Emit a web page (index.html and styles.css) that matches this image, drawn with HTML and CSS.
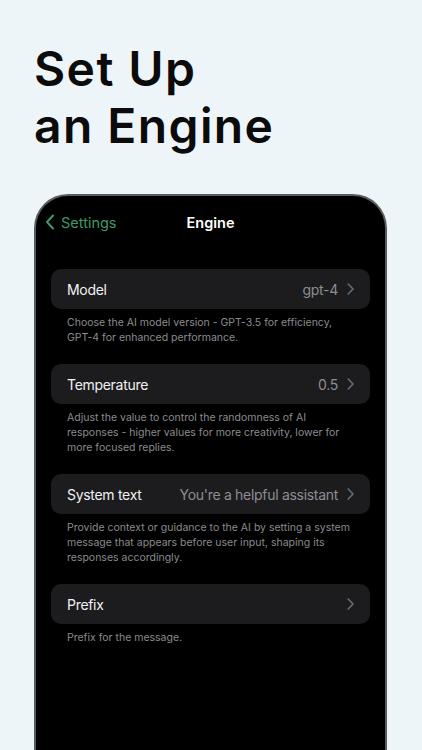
FILE: index.html
```html
<!DOCTYPE html>
<html>
<head>
<meta charset="utf-8">
<link rel="stylesheet" href="styles.css">
</head>
<body>
<div class="page">
  <h1 class="title">Set Up<br>an Engine</h1>
  <div class="phone">
    <div class="nav">
      <div class="back">
        <svg class="back-icon" width="10" height="16" viewBox="0 0 10 16"><path d="M8 1.5 L2 8 L8 14.5" fill="none" stroke="#3d9a68" stroke-width="2" stroke-linecap="round" stroke-linejoin="round"/></svg>
        <span>Settings</span>
      </div>
      <div class="nav-title">Engine</div>
    </div>
    <div class="list">
      <div class="group">
        <div class="row"><span class="label">Model</span><span class="value">gpt-4</span><svg class="chev" width="7" height="12" viewBox="0 0 7 12"><path d="M1.2 1 L6 6 L1.2 11" fill="none" stroke="#6c6c70" stroke-width="1.6" stroke-linecap="round" stroke-linejoin="round"/></svg></div>
        <p class="desc">Choose the AI model version - GPT-3.5 for efficiency, GPT-4 for enhanced performance.</p>
      </div>
      <div class="group">
        <div class="row"><span class="label">Temperature</span><span class="value">0.5</span><svg class="chev" width="7" height="12" viewBox="0 0 7 12"><path d="M1.2 1 L6 6 L1.2 11" fill="none" stroke="#6c6c70" stroke-width="1.6" stroke-linecap="round" stroke-linejoin="round"/></svg></div>
        <p class="desc">Adjust the value to control the randomness of AI responses - higher values for more creativity, lower for more focused replies.</p>
      </div>
      <div class="group">
        <div class="row"><span class="label">System text</span><span class="value">You're a helpful assistant</span><svg class="chev" width="7" height="12" viewBox="0 0 7 12"><path d="M1.2 1 L6 6 L1.2 11" fill="none" stroke="#6c6c70" stroke-width="1.6" stroke-linecap="round" stroke-linejoin="round"/></svg></div>
        <p class="desc">Provide context or guidance to the AI by setting a system message that appears before user input, shaping its responses accordingly.</p>
      </div>
      <div class="group">
        <div class="row"><span class="label">Prefix</span><span class="value"></span><svg class="chev" width="7" height="12" viewBox="0 0 7 12"><path d="M1.2 1 L6 6 L1.2 11" fill="none" stroke="#6c6c70" stroke-width="1.6" stroke-linecap="round" stroke-linejoin="round"/></svg></div>
        <p class="desc">Prefix for the message.</p>
      </div>
    </div>
  </div>
</div>
</body>
</html>
```
FILE: styles.css
```css
html, body {
  margin: 0;
  padding: 0;
  height: 750px;
  overflow: hidden;
  background: #eef5f8;
}
.page {
  height: 750px;
  overflow: hidden;
  display: flex;
  flex-direction: column;
}
.title {
  margin: 0;
  padding: 40px 0 0 34px;
  font-family: "Inter", "DejaVu Sans", sans-serif;
  font-weight: 600;
  font-size: 48px;
  line-height: 57px;
  letter-spacing: 1.4px;
  color: #0b0b0b;
  height: 154px;
  box-sizing: border-box;
}
.phone {
  margin: 40px 35px 0 34px;
  flex: 1;
  background: #000;
  border: 2px solid #585c5f;
  border-bottom: none;
  border-radius: 34px 34px 0 0;
  font-family: "Inter", "Liberation Sans", sans-serif;
}
.nav {
  position: relative;
  height: 52px;
  display: flex;
  align-items: center;
  justify-content: center;
}
.back {
  position: absolute;
  left: 9px;
  top: 0;
  height: 52px;
  display: flex;
  align-items: center;
  gap: 6px;
  color: #3d9a68;
  font-size: 14.5px;
}
.nav-title {
  color: #fff;
  font-size: 14.5px;
  font-weight: 600;
}
.list {
  padding: 21px 15px 0 15px;
  display: flex;
  flex-direction: column;
  gap: 19px;
}
.row {
  height: 40px;
  background: #1c1c1e;
  border-radius: 10px;
  display: flex;
  align-items: center;
  padding: 0 16px;
  gap: 9px;
}
.label {
  color: #f2f2f2;
  font-size: 14px;
  letter-spacing: -0.3px;
}
.value {
  margin-left: auto;
  color: #8d8d92;
  font-size: 14px;
  letter-spacing: -0.3px;
}
.chev {
  flex: none;
}
.desc {
  margin: 6px 0 0 0;
  padding: 0 16px;
  color: #8b8b90;
  font-size: 10.5px;
  line-height: 15px;
}
```
